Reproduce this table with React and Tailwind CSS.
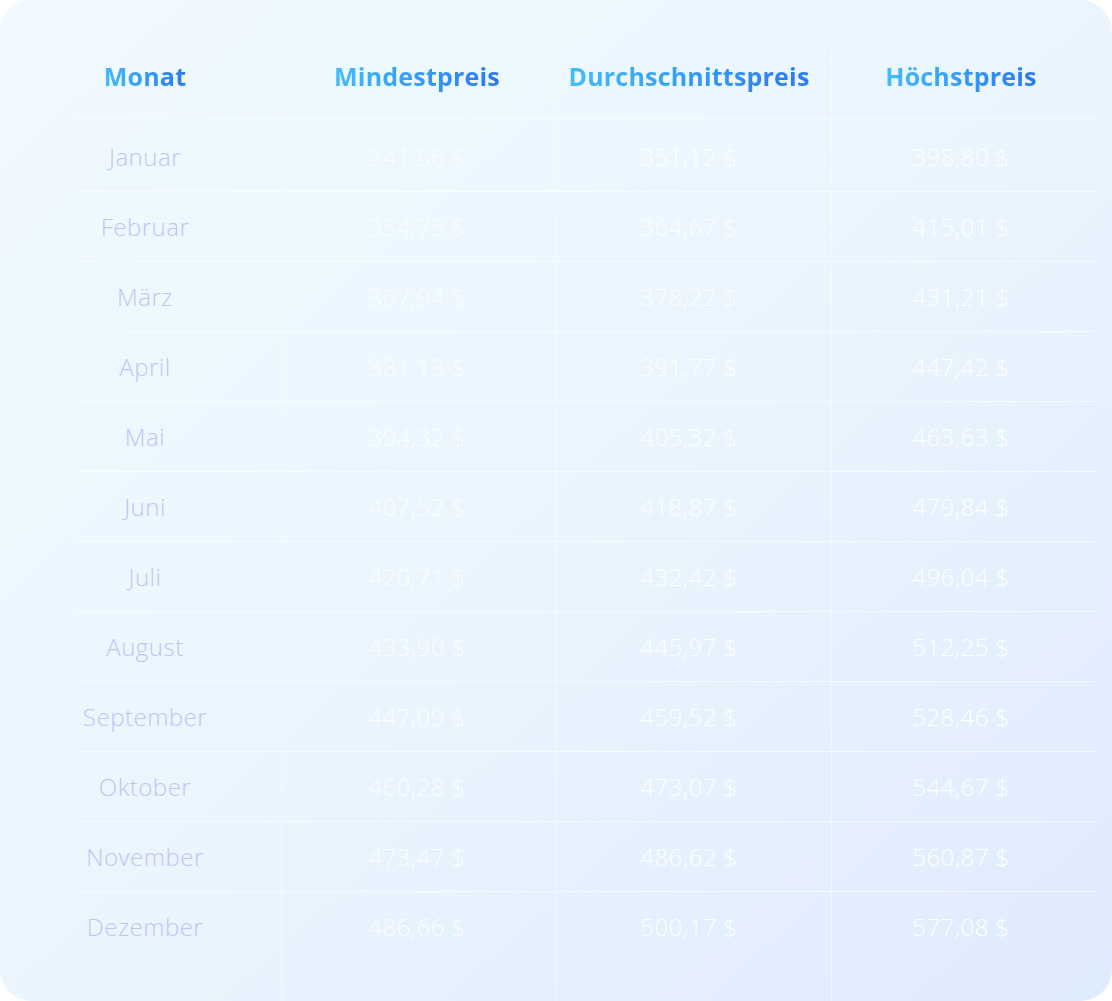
import React from 'react';

const rows = [
  ['Januar', '341,56 $', '351,12 $', '398,80 $'],
  ['Februar', '354,75 $', '364,67 $', '415,01 $'],
  ['März', '367,94 $', '378,22 $', '431,21 $'],
  ['April', '381,13 $', '391,77 $', '447,42 $'],
  ['Mai', '394,32 $', '405,32 $', '463,63 $'],
  ['Juni', '407,52 $', '418,87 $', '479,84 $'],
  ['Juli', '420,71 $', '432,42 $', '496,04 $'],
  ['August', '433,90 $', '445,97 $', '512,25 $'],
  ['September', '447,09 $', '459,52 $', '528,46 $'],
  ['Oktober', '460,28 $', '473,07 $', '544,67 $'],
  ['November', '473,47 $', '486,62 $', '560,87 $'],
  ['Dezember', '486,66 $', '500,17 $', '577,08 $'],
];

const headers = ['Monat', 'Mindestpreis', 'Durchschnittspreis', 'Höchstpreis'];

// ── Header cell with gradient text ────────────────────────────────────────────
function HeadCell({ label }) {
  return (
    <div className="flex items-center justify-center">
      <span className="inline-block bg-gradient-to-r from-[#44bcfb] to-[#2b78f5] bg-clip-text text-transparent text-[25px] font-bold tracking-[0.2px]">
        {label}
      </span>
    </div>
  );
}

const cell = 'flex items-center justify-center text-[24px] font-light tracking-[0.5px]';

export default function App() {
  return (
    <div
      className="w-[1112px] h-[1001px] rounded-[32px] overflow-hidden bg-gradient-to-br from-[#f0faff] via-[#eaf5fe] to-[#dfebfe] pt-[34px] pl-[9px]"
      style={{ fontFamily: '"Open Sans", "Noto Sans", sans-serif' }}
    >
      <div className="relative w-[1088px] h-[967px]">
        {/* column separators */}
        <div className="absolute left-[272px] top-[10px] bottom-[-40px] w-px bg-white/40" />
        <div className="absolute left-[547px] top-[10px] bottom-[-40px] w-px bg-white/40" />
        <div className="absolute left-[822px] top-[10px] bottom-[-40px] w-px bg-white/40" />

        {/* header */}
        <div className="relative grid grid-cols-4 h-[86px] after:absolute after:left-[66px] after:right-0 after:bottom-[1px] after:h-px after:bg-white/60">
          {headers.map((h) => (
            <HeadCell key={h} label={h} />
          ))}
        </div>

        {/* body */}
        <div className="pt-[2px]">
          {rows.map((r, i) => (
            <div
              key={r[0]}
              className={`relative grid grid-cols-4 h-[70px] ${
                i < rows.length - 1
                  ? 'after:absolute after:left-[66px] after:right-0 after:bottom-0 after:h-px after:bg-white/60'
                  : ''
              }`}
            >
              <div className={`${cell} text-[#bcc5fb]`}>{r[0]}</div>
              <div className={`${cell} text-white/80`}>{r[1]}</div>
              <div className={`${cell} text-white/90`}>{r[2]}</div>
              <div className={`${cell} text-white`}>{r[3]}</div>
            </div>
          ))}
        </div>
      </div>
    </div>
  );
}
